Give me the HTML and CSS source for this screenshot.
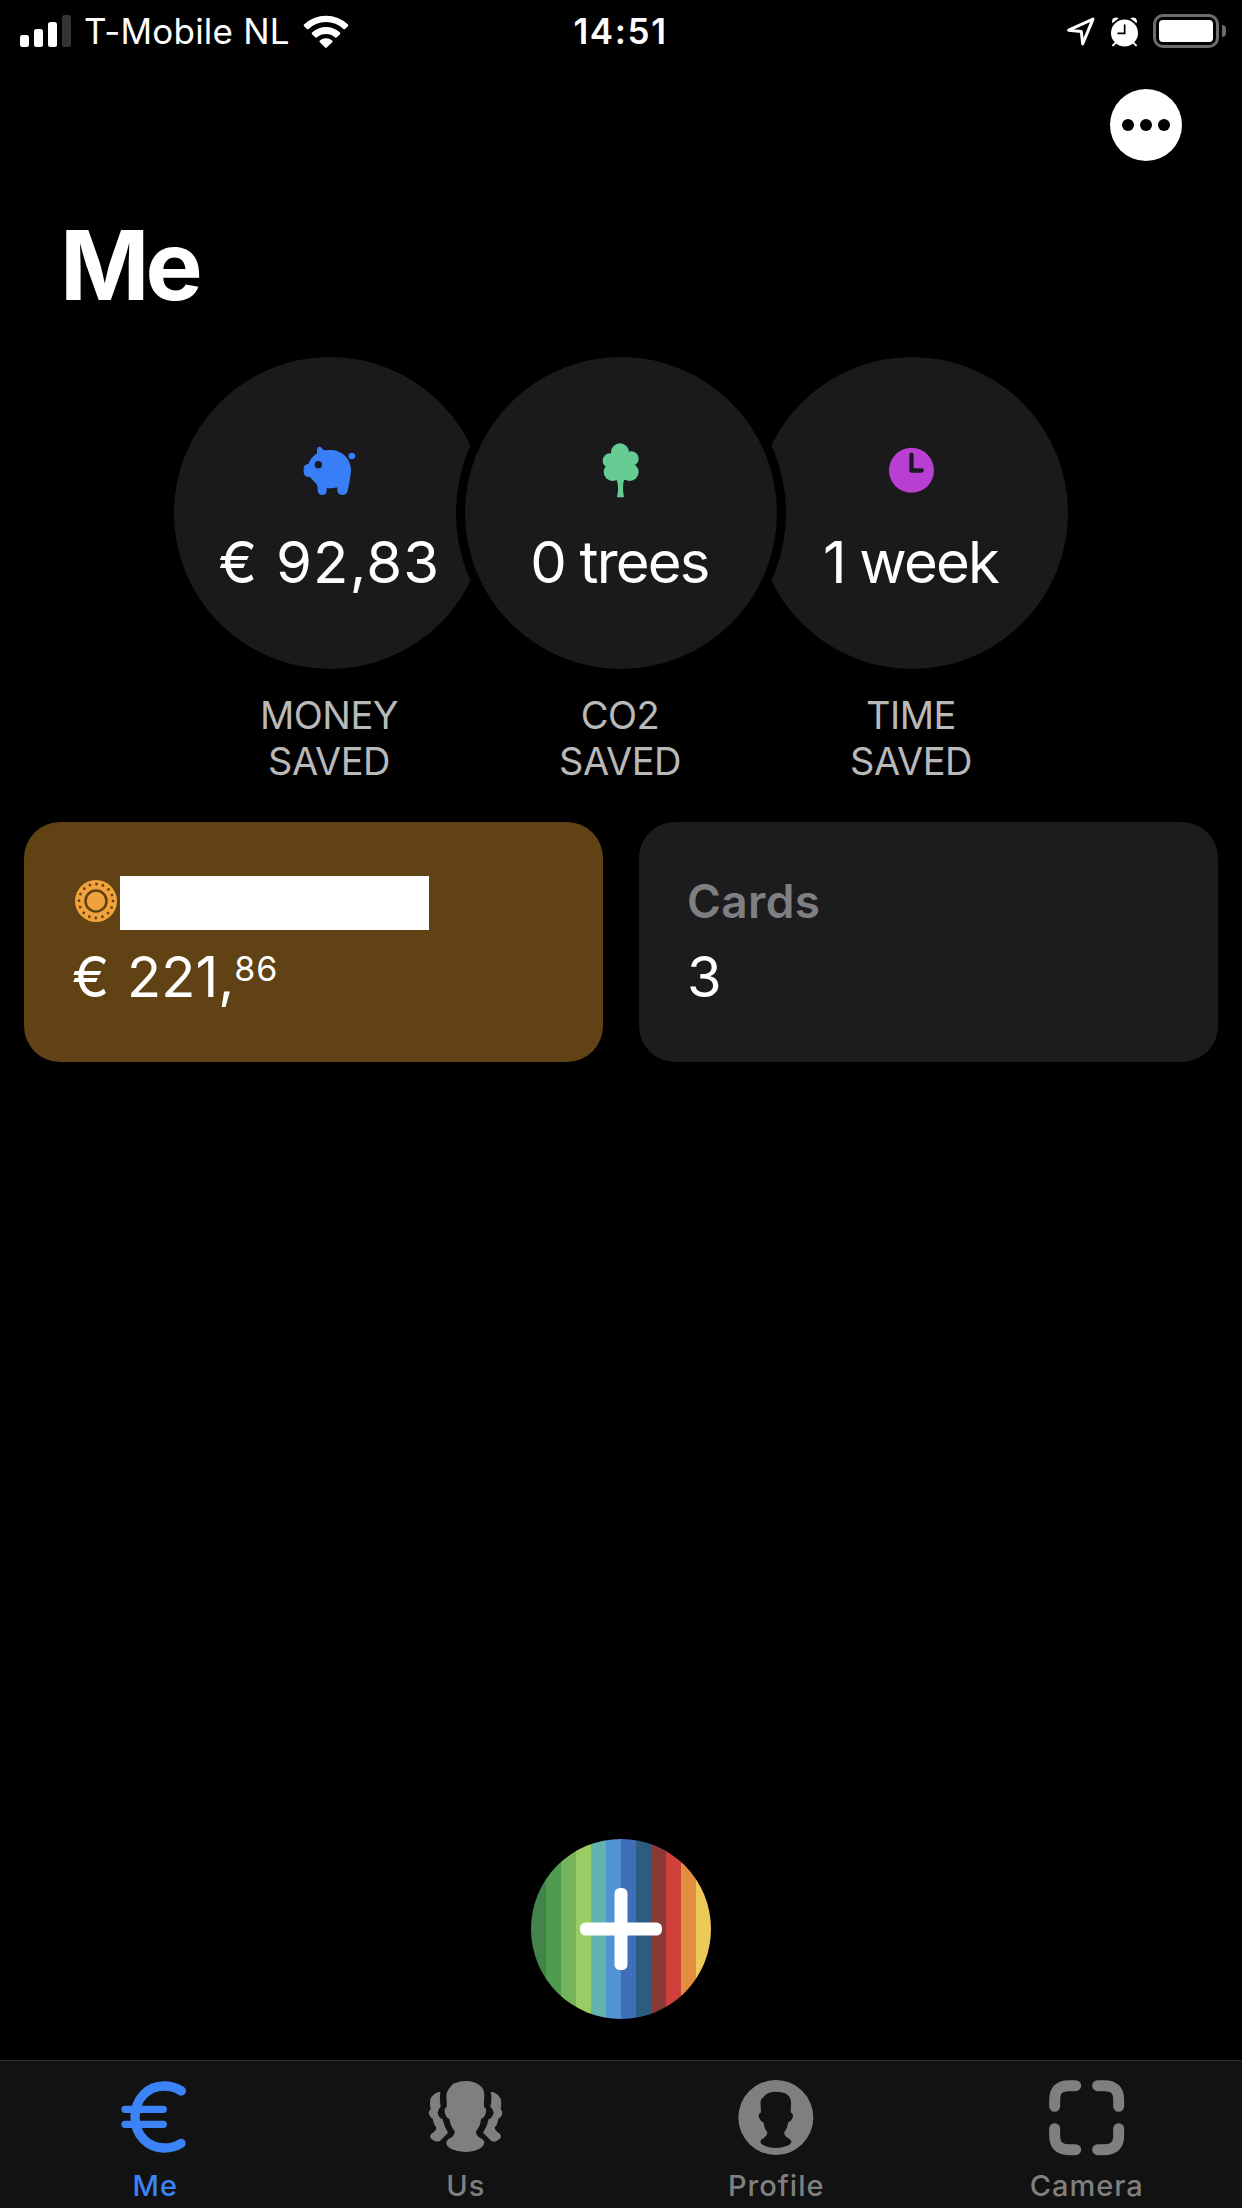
FILE: index.html
```
<!DOCTYPE html>
<html lang="en">
<head>
  <meta charset="UTF-8">
  <meta name="viewport" content="width=device-width, initial-scale=1.0">
  <link rel="stylesheet" href="styles.css">
  <title>Me</title>
</head>
<body>
  <div class="app">
    <div class="status-bar">
      <div class="status-left">
        <svg class="signal" viewBox="0 0 51 32">
          <rect x="0" y="20" width="9" height="12" rx="2.5"/>
          <rect x="14" y="14" width="9" height="18" rx="2.5"/>
          <rect x="28" y="7" width="9" height="25" rx="2.5"/>
          <rect class="off" x="42" y="0" width="9" height="32" rx="2.5"/>
        </svg>
        <span class="carrier">T-Mobile NL</span>
        <svg class="wifi" viewBox="0 0 46 33">
          <path d="M1 9.500Q.2 10.300 1 11.200L4 14Q4.800 14.700 5.600 14A25 25 0 0 1 40.400 14Q41.200 14.700 42 14L45 11.200Q45.800 10.300 45 9.500A32 32 0 0 0 1 9.500Z"/>
          <path d="M9 17.600Q8.300 18.400 9 19.200L12.200 22.300Q13 23 13.800 22.400A14 14 0 0 1 32.200 22.400Q33 23 33.800 22.300L37 19.200Q37.700 18.400 37 17.600A20.500 20.500 0 0 0 9 17.600Z"/>
          <path d="M16.800 25.600Q16 26.400 16.800 27.200L22.200 32.600Q23 33.400 23.800 32.600L29.200 27.200Q30 26.400 29.200 25.600A9.300 9.300 0 0 0 16.800 25.600Z"/>
        </svg>
      </div>
      <div class="time">14:51</div>
      <div class="status-right">
        <svg class="location" viewBox="82 49 84 86">
          <path d="M87 88L160 55L129 129L125 92Z"/>
        </svg>
        <svg class="alarm" viewBox="210 44 87 93">
          <path d="M217 66Q214 55 221 50Q230 46 236 51ZM290 66Q293 55 286 50Q277 46 271 51Z"/>
          <circle cx="253.500" cy="95" r="40.500"/>
          <path class="feet" d="M228 123L219 132M279 123L288 132"/>
          <path class="hands" d="M254 71V96H234"/>
        </svg>
        <div class="battery"><div class="battery-level"></div></div>
        <div class="battery-tip"></div>
      </div>
    </div>

    <div class="top-bar">
      <button class="more">
        <span></span><span></span><span></span>
      </button>
    </div>

    <h1>Me</h1>

    <div class="stats">
      <div class="stat">
        <div class="circle">
          <svg viewBox="30 33 180 180">
            <path class="blue" fill-rule="evenodd" d="M81 56Q83 49 91 50Q95 53 102 61Q112 59 124 60C160 62 184 88 183 124Q180 152 173 182Q170 195 156 195Q142 194 142 180V172Q125 176 110 174V183Q109 195 96 195Q83 194 83 181V173Q82 164 75 157Q66 149 60 141H54Q42 139 41 127V113Q43 102 56 101Q63 82 81 70ZM85 93A11 11 0 1 0 85 115A11 11 0 1 0 85 93Z"/>
            <circle class="blue" cx="185.500" cy="78" r="10"/>
          </svg>
          <div class="value money">€ 92,83</div>
        </div>
        <p>MONEY<br>SAVED</p>
      </div>
      <div class="stat middle">
        <div class="circle">
          <svg class="green" viewBox="33 33 180 180">
            <circle cx="120" cy="67" r="27"/>
            <circle cx="90" cy="92" r="22"/>
            <circle cx="154" cy="86" r="22"/>
            <circle cx="98" cy="126" r="27"/>
            <circle cx="149" cy="126" r="27"/>
            <path d="M92 71H148L166 105L150 150H132Q126 172 132 202H111Q118 172 110 150H95L76 109Z"/>
          </svg>
          <div class="value">0 trees</div>
        </div>
        <p>CO2<br>SAVED</p>
      </div>
      <div class="stat">
        <div class="circle">
          <svg viewBox="846 303 180 180">
            <circle class="purple" cx="934.500" cy="391" r="67.500"/>
            <path class="clock-hands" d="M934.500 344V391.500H965"/>
          </svg>
          <div class="value">1 week</div>
        </div>
        <p>TIME<br>SAVED</p>
      </div>
    </div>

    <div class="cards">
      <div class="card account">
        <div class="card-title">
          <svg class="coin" viewBox="-21 -21 42 42">
            <circle class="orange" r="21"/>
            <circle class="dots" r="17"/>
            <circle class="ring" r="10.500"/>
          </svg>
          <div class="hidden-name"></div>
        </div>
        <div class="amount">€ 221,<span>86</span></div>
      </div>
      <div class="card">
        <div class="card-title"><span>Cards</span></div>
        <div class="amount">3</div>
      </div>
    </div>

    <button class="add">
      <svg viewBox="0 0 82 82">
        <rect x="34.500" y="0" width="13" height="82" rx="5.500"/>
        <rect x="0" y="34.500" width="82" height="13" rx="5.500"/>
      </svg>
    </button>

    <div class="tab-bar">
      <div class="tab active">
        <svg viewBox="113 90 225 225">
          <path class="curve" d="M303 123C288 113 270 108 251 108C203 108 164 146 164 201C164 255 203 294 251 294C270 294 288 289 302 280"/>
          <path class="bars" d="M134 178H249M134 223H249"/>
        </svg>
        <span>Me</span>
      </div>
      <div class="tab">
        <svg viewBox="1045 90 225 225">
          <path d="M1157 93Q1189 93 1205 110Q1216 122 1214 142Q1212 157 1213 171Q1221 175 1219 186Q1216 202 1204 207Q1202 230 1189 243Q1188 257 1202 264Q1214 270 1214 278Q1212 290 1196 298Q1180 306 1157 306Q1134 306 1117 298Q1101 290 1100 278Q1100 270 1112 264Q1126 257 1125 243Q1113 230 1109 207Q1098 202 1095 186Q1093 175 1101 171Q1102 157 1100 142Q1099 122 1115 108Q1115 103 1121 101Q1137 93 1157 93Z"/>
          <path d="M1082 125Q1078 148 1083 170Q1075 177 1074 188Q1077 203 1089 208Q1093 230 1105 248L1081 273Q1074 277 1063 272Q1051 266 1051 258Q1054 250 1062 247Q1070 242 1070 233Q1061 221 1059 206Q1050 202 1047 190Q1048 181 1053 178Q1049 158 1053 145Q1061 128 1082 125Z"/>
          <path d="M1233 125Q1238 148 1232 170Q1241 177 1242 188Q1238 203 1227 208Q1223 230 1210 248L1235 273Q1241 277 1252 272Q1264 266 1264 258Q1262 250 1254 247Q1246 242 1245 233Q1255 221 1256 206Q1266 202 1268 190Q1268 181 1263 178Q1267 158 1262 145Q1255 128 1233 125Z"/>
        </svg>
        <span>Us</span>
      </div>
      <div class="tab">
        <svg viewBox="116 90 225 225">
          <path fill-rule="evenodd" d="M226.500 90A112.500 112.500 0 0 1 226.500 315A112.500 112.500 0 0 1 226.500 90ZM226 125Q207 125 196 134L191 140Q178 147 181 167L182 187Q174 191 175 199Q178 213 189 217Q191 235 201 247Q202 256 192 263Q180 269 180 275Q181 283 194 288Q209 294 226 294Q244 294 258 288Q272 283 273 275Q273 269 262 263Q251 257 252 247Q261 235 264 217Q275 213 278 199Q279 191 271 187Q271 176 272 163Q275 125 226 125Z"/>
        </svg>
        <span>Profile</span>
      </div>
      <div class="tab">
        <svg viewBox="0 0 225 225">
          <path class="frame" d="M17 79V59Q17 17 59 17H80M146 17H167Q209 17 209 59V79M209 146V167Q209 209 167 209H146M80 209H59Q17 209 17 167V146"/>
        </svg>
        <span>Camera</span>
      </div>
    </div>
  </div>
</body>
</html>
```
FILE: styles.css
```
* {
  box-sizing: border-box;
}

body {
  margin: 0;
  background-color: #000;
  color: #fff;
  font-family: Inter, "Liberation Sans", sans-serif;
}

svg {
  display: block;
  flex-shrink: 0;
  overflow: visible;
}

button {
  padding: 0;
  border: none;
  cursor: pointer;
}

.app {
  display: flex;
  flex-direction: column;
  width: 1242px;
  height: 2208px;
  overflow: hidden;
}

/* status bar */
.status-bar {
  display: grid;
  grid-template-columns: 1fr auto 1fr;
  align-items: center;
  height: 62px;
  padding: 0 16px 0 20px;
  fill: #fff;
}

.status-left,
.status-right {
  display: flex;
  align-items: center;
}

.status-right {
  justify-content: flex-end;
}

.signal {
  width: 51px;
  height: 32px;
}

.signal .off {
  fill: #333;
}

.carrier {
  margin-left: 13px;
  font-size: 35px;
  letter-spacing: 0.2px;
}

.wifi {
  width: 46px;
  height: 33px;
  margin-left: 13px;
}

.time {
  margin-right: 5px;
  font-size: 35px;
  font-weight: 600;
  letter-spacing: 1.6px;
}

.location {
  width: 28px;
  height: 29px;
  margin-right: 15px;
  fill: none;
  stroke: #fff;
  stroke-width: 9;
  stroke-linejoin: round;
}

.alarm {
  width: 29px;
  height: 31px;
  margin-right: 14px;
}

.alarm .feet {
  stroke: #fff;
  stroke-width: 6;
  stroke-linecap: round;
}

.alarm .hands {
  fill: none;
  stroke: #000;
  stroke-width: 5;
  stroke-linecap: round;
}

.battery {
  width: 66px;
  height: 34px;
  padding: 3px;
  border: 3px solid #6c6c6c;
  border-radius: 10px;
}

.battery-level {
  width: 54px;
  height: 22px;
  border-radius: 4px;
  background-color: #fff;
}

.battery-tip {
  width: 4px;
  height: 12px;
  margin-left: 3px;
  border-radius: 0 4px 4px 0;
  background-color: #6c6c6c;
}

/* header */
.top-bar {
  display: flex;
  justify-content: flex-end;
  padding: 27px 60px 0 0;
}

.more {
  display: flex;
  align-items: center;
  justify-content: center;
  gap: 6px;
  width: 72px;
  height: 72px;
  border-radius: 50%;
  background-color: #fff;
}

.more span {
  width: 12px;
  height: 12px;
  border-radius: 50%;
  background-color: #000;
}

h1 {
  margin: 46px 0 0 60px;
  font-size: 96px;
  font-weight: 700;
  line-height: 117px;
  letter-spacing: -4px;
}

/* savings */
.stats {
  display: flex;
  justify-content: center;
  margin-top: 24px;
}

.stat {
  width: 330px;
}

.stat.middle {
  position: relative;
  margin: 0 -39px;
}

.circle {
  display: flex;
  flex-direction: column;
  align-items: center;
  height: 330px;
  padding-top: 84px;
  border: 9px solid #000;
  border-radius: 50%;
  background-color: #1a1a1c;
}

.circle svg {
  width: 60px;
  height: 60px;
}

.value {
  margin: 25px 3px 0 0;
  font-size: 58px;
  line-height: 72px;
  letter-spacing: -1.8px;
  white-space: nowrap;
}

.value.money {
  margin-right: 1px;
  letter-spacing: 1.2px;
}

.stat p {
  margin: 14px 2px 0 0;
  color: #b9b9b9;
  font-size: 38px;
  font-weight: 400;
  line-height: 46px;
  letter-spacing: -0.5px;
  text-align: center;
}

.blue {
  fill: #387ff7;
}

.green {
  fill: #67cb94;
}

.purple {
  fill: #b83fd1;
}

.clock-hands {
  fill: none;
  stroke: #1a1a1c;
  stroke-width: 13;
  stroke-linecap: round;
  stroke-linejoin: round;
}

/* cards */
.cards {
  display: grid;
  grid-template-columns: 1fr 1fr;
  gap: 36px;
  padding: 0 24px;
  margin-top: 38px;
}

.card {
  height: 240px;
  padding: 54px 48px 0;
  border-radius: 36px;
  background-color: #1c1c1e;
}

.card.account {
  background-color: #614215;
}

.card-title {
  display: flex;
  align-items: center;
  height: 54px;
  color: #7f7f81;
  font-size: 46px;
  font-weight: 600;
  letter-spacing: 0.4px;
}

.card-title span {
  padding-bottom: 5px;
}

.coin {
  width: 42px;
  height: 42px;
  margin: -4px 0 0 3px;
}

.orange {
  fill: #f0a33c;
}

.coin .dots {
  fill: none;
  stroke: #614215;
  stroke-width: 2.8;
  stroke-linecap: round;
  stroke-dasharray: 0 6.676;
}

.coin .ring {
  fill: none;
  stroke: #614215;
  stroke-width: 2.6;
}

.hidden-name {
  width: 309px;
  height: 54px;
  margin-left: 3px;
  background-color: #fff;
}

.amount {
  display: flex;
  margin-top: 14px;
  font-size: 56px;
  line-height: 66px;
  word-spacing: 2px;
  white-space: pre;
}

.amount span {
  font-size: 34px;
  line-height: 50px;
  letter-spacing: 1px;
}

/* add button */
.add {
  display: flex;
  align-items: center;
  justify-content: center;
  width: 180px;
  height: 180px;
  margin: auto auto 41px;
  border-radius: 50%;
  background: linear-gradient(to right,
    #42844a 0 15px,
    #4f9b50 15px 30px,
    #75b45b 30px 45px,
    #99cc64 45px 60px,
    #64b4ae 60px 75px,
    #5193d3 75px 90px,
    #3f6fb8 90px 105px,
    #2e5c80 105px 120px,
    #8b3838 120px 135px,
    #d0413b 135px 150px,
    #e38d3e 150px 165px,
    #edca57 165px);
}

.add svg {
  width: 82px;
  height: 82px;
  fill: #fff;
}

/* tab bar */
.tab-bar {
  display: flex;
  height: 148px;
  border-top: 1px solid #2b2b2b;
  background-color: #121212;
}

.tab {
  display: flex;
  flex: 1;
  flex-direction: column;
  align-items: center;
  padding-top: 19px;
  color: #7f7f7f;
  fill: #7f7f7f;
  font-size: 29px;
  font-weight: 500;
  letter-spacing: 1px;
}

.tab svg {
  width: 75px;
  height: 75px;
}

.tab span {
  margin-top: 13px;
  line-height: 36px;
}

.tab.active {
  color: #3b83f7;
}

.curve,
.bars,
.frame {
  fill: none;
  stroke: currentColor;
  stroke-width: 28;
  stroke-linecap: round;
}

.bars {
  stroke-width: 22;
}

.frame {
  stroke-width: 33;
}
```
